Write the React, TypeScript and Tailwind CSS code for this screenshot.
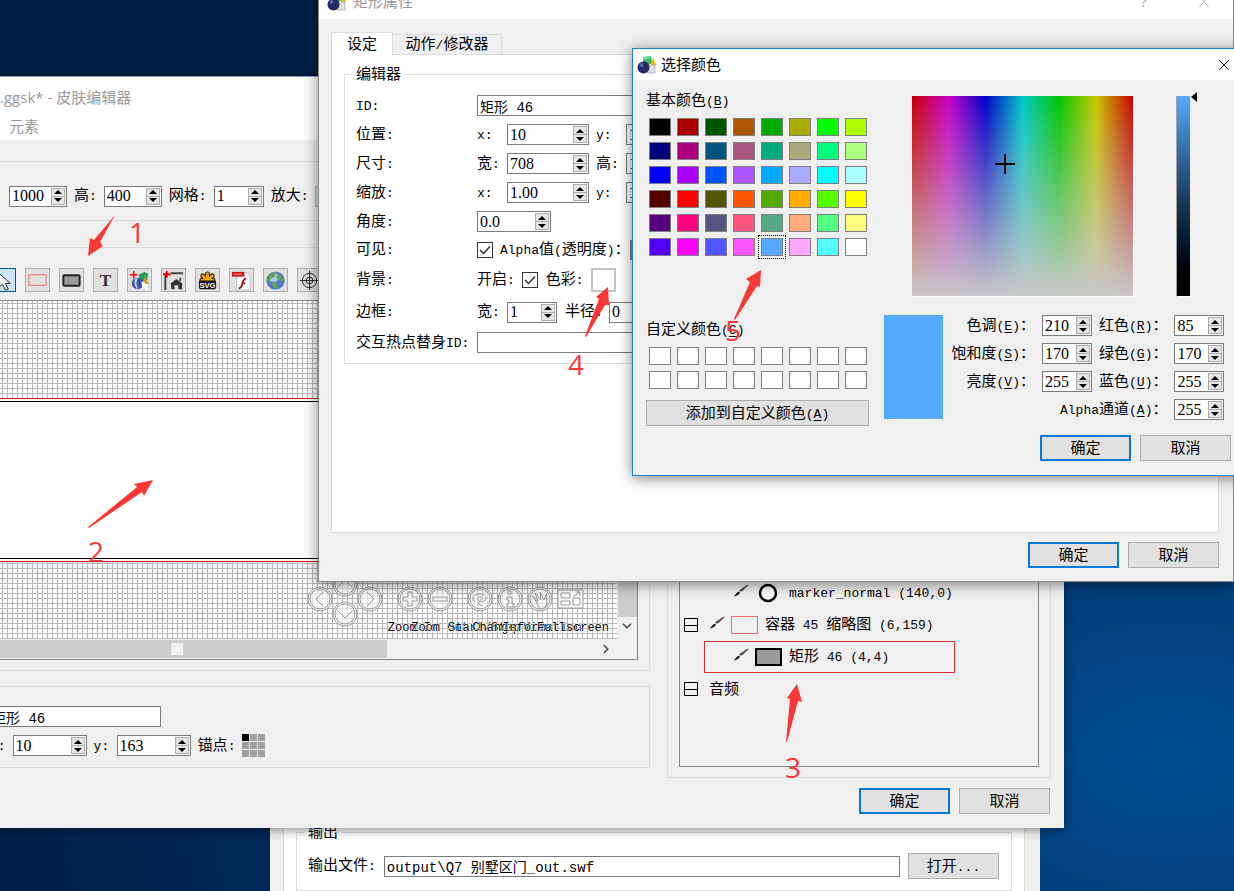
import React, { FC, ReactNode } from 'react';
import { X, ChevronDown, ChevronRight } from 'lucide-react';

const BASIC_COLORS = [
  'bg-[#000000]', 'bg-[#aa0000]', 'bg-[#005500]', 'bg-[#aa5500]', 'bg-[#00aa00]', 'bg-[#aaaa00]', 'bg-[#00ff00]', 'bg-[#aaff00]',
  'bg-[#00007f]', 'bg-[#aa007f]', 'bg-[#00557f]', 'bg-[#aa557f]', 'bg-[#00aa7f]', 'bg-[#aaaa7f]', 'bg-[#00ff7f]', 'bg-[#aaff7f]',
  'bg-[#0000ff]', 'bg-[#aa00ff]', 'bg-[#0055ff]', 'bg-[#aa55ff]', 'bg-[#00aaff]', 'bg-[#aaaaff]', 'bg-[#00ffff]', 'bg-[#aaffff]',
  'bg-[#550000]', 'bg-[#ff0000]', 'bg-[#555500]', 'bg-[#ff5500]', 'bg-[#55aa00]', 'bg-[#ffaa00]', 'bg-[#55ff00]', 'bg-[#ffff00]',
  'bg-[#55007f]', 'bg-[#ff007f]', 'bg-[#55557f]', 'bg-[#ff557f]', 'bg-[#55aa7f]', 'bg-[#ffaa7f]', 'bg-[#55ff7f]', 'bg-[#ffff7f]',
  'bg-[#5500ff]', 'bg-[#ff00ff]', 'bg-[#5555ff]', 'bg-[#ff55ff]', 'bg-[#55aaff]', 'bg-[#ffaaff]', 'bg-[#55ffff]', 'bg-[#ffffff]',
];
const SELECTED_COLOR = 44;

// Latin runs are set smaller than the Chinese ones; "&" marks the access key, as in Qt
const T: FC<{ children: string }> = ({ children }) => (
  <span className="whitespace-pre">
    {children.split(/([\x20-\x7e]+)/).map((part, i) => {
      if (i % 2 === 0) return part;
      const [before, after] = part.split('&');
      return (
        <span key={i} className="font-['Liberation_Mono',monospace] text-[13px]">
          {before}
          {after && <u className="underline-offset-2">{after[0]}</u>}
          {after && after.slice(1)}
        </span>
      );
    })}
  </span>
);

const Label: FC<{ id?: string; className?: string; children: string }> = ({ id, className = '', children }) => (
  <label htmlFor={id} className={`shrink-0 ${className}`}>
    <T>{children}</T>
  </label>
);

const Spin: FC<{ id: string; value: string; className?: string }> = ({ id, value, className = 'w-[50px]' }) => (
  <div className={`flex h-[21px] shrink-0 items-center border border-[#7a7a7a] bg-white pr-px ${className}`}>
    <input
      id={id}
      defaultValue={value}
      className="w-full min-w-0 flex-1 bg-transparent pl-0.5 font-['Liberation_Serif',serif] text-base leading-none outline-none"
    />
    <div className="flex h-[17px] w-[14px] shrink-0 flex-col border border-[#adadad] bg-[#e6e6e6]">
      <button aria-label="+" className="flex flex-1 items-center justify-center border-b border-[#adadad]">
        <svg width="8" height="4" viewBox="0 0 8 4"><path d="M0 4 4 0 8 4z" /></svg>
      </button>
      <button aria-label="-" className="flex flex-1 items-center justify-center">
        <svg width="8" height="4" viewBox="0 0 8 4"><path d="M0 0 4 4 8 0z" /></svg>
      </button>
    </div>
  </div>
);

const TextBox: FC<{ id: string; value: string; className?: string }> = ({ id, value, className = '' }) => (
  <input
    id={id}
    defaultValue={value}
    className={`h-[21px] min-w-0 border border-[#7a7a7a] bg-white font-['Liberation_Mono','Noto_Sans_CJK_SC',monospace] text-sm outline-none ${className}`}
  />
);

const Check: FC<{ id: string }> = ({ id }) => (
  <span className="relative h-4 w-4 shrink-0">
    <input id={id} type="checkbox" defaultChecked className="block h-4 w-4 appearance-none border border-[#333] bg-white" />
    <svg className="pointer-events-none absolute left-0 top-0" width="16" height="16" viewBox="0 0 16 16" fill="none" stroke="#333" strokeWidth="1.5">
      <path d="m3 8 3.5 3.5L13 4.5" />
    </svg>
  </span>
);

const Button: FC<{ primary?: boolean; className?: string; children: string }> = ({ primary, className = 'w-[91px]', children }) => (
  <button
    className={`h-[26px] shrink-0 bg-[#e1e1e1] leading-none ${primary ? 'border-2 border-[#0078d7]' : 'border border-[#adadad]'} ${className}`}
  >
    <T>{children}</T>
  </button>
);

const AppIcon: FC = () => (
  <svg width="20" height="20" viewBox="0 0 20 20">
    <path d="m6 2 8-1 1 7-5 3-4-3z" fill="#35b56b" />
    <path d="m6 2 8-1-2 3-6 1z" fill="#6fdc9b" />
    <path d="m14 10 2-8 3 8z" fill="#e8b90c" />
    <path d="m11 11 7-1v8h-8z" fill="#dfe4e6" stroke="#8c9498" strokeWidth=".6" />
    <circle cx="6.5" cy="12.5" r="6" fill="#23285e" />
    <circle cx="4.5" cy="10" r="2" fill="#5961a8" />
  </svg>
);

const Brush: FC = () => (
  <svg width="16" height="14" viewBox="0 0 16 14" className="mb-1 shrink-0">
    <path d="M15.500 1.200 14.500.5 7 5.500 6.200 7 7.800 7.800 9.500 7z" fill="#555" />
    <path d="M5.500 7.800 7 8.800C6 11 3.500 12 .5 12.500c1.500-1 2.500-3.500 5-4.700z" fill="#1c1c1c" />
  </svg>
);

const Expander: FC = () => (
  <button aria-label="-" className="shrink-0">
    <svg width="14" height="14" viewBox="0 0 14 14" fill="none" stroke="#000"><path d="M.5.5h13v13H.5zM.5 7.500h13" /></svg>
  </button>
);

const TOOLS: { name: string; icon: ReactNode }[] = [
  { name: 'select', icon: <path d="M7 4v15l4-3 3 6 3-1-3-6h5z" fill="#fff" stroke="#222" /> },
  { name: 'container', icon: <rect x="3" y="6" width="18" height="11" fill="none" stroke="#f26a6a" /> },
  { name: 'rectangle', icon: <rect x="3.500" y="6.500" width="17" height="11" rx="1" fill="#999" stroke="#222" strokeWidth="2" /> },
  {
    name: 'text',
    icon: <text x="12" y="18" textAnchor="middle" fontFamily="Liberation Serif" fontWeight="700" fontSize="18" fill="#333">T</text>,
  },
  {
    name: 'image',
    icon: (
      <>
        <path d="m11 6 6-3 4 2-1 7-7 1z" fill="#2a9a5c" />
        <path d="m17 7 5 9h-5z" fill="#d9a514" />
        <circle cx="10" cy="15" r="6" fill="#3a55b0" />
        <path d="M8 10q-3 5 1 10l2 1q-4-5-1-11z" fill="#dbe4ff" />
        <path d="m14 13 1 8 2-2 3 4 2-2-3-3 3-1z" fill="#fff" />
        <path d="M6 2v8M2 6h8" stroke="#f00" strokeWidth="1.500" />
      </>
    ),
  },
  {
    name: 'hotspot',
    icon: (
      <>
        <path d="M3.500 6v16M9 4.500h13" stroke="#444" strokeWidth="2" />
        <path d="m9 15 6-4.500 6 4.500v6h-4v-4h-4v4h-3z" fill="#333" />
        <path d="M18 9h2v4h-2z" fill="#555" />
        <path d="M5 2v7M1 5.500h8" stroke="#e00" strokeWidth="2" />
      </>
    ),
  },
  {
    name: 'svg',
    icon: (
      <>
        <g stroke="#111" strokeWidth="5" strokeLinecap="round">
          <path d="M12 12V5M12 12 7 7M12 12l5-5M12 12H6M12 12h6" />
        </g>
        <g stroke="#f6a31c" strokeWidth="3" strokeLinecap="round">
          <path d="M12 12V5M12 12 7 7M12 12l5-5M12 12H6M12 12h6" />
        </g>
        <rect x="3" y="12" width="18" height="9" rx="2" fill="#111" />
        <text x="12" y="20" textAnchor="middle" fontFamily="Liberation Sans" fontWeight="700" fontSize="8" fill="#fff">SVG</text>
      </>
    ),
  },
  {
    name: 'flash',
    icon: (
      <>
        <path d="M7 4h11l3 3v15H7z" fill="#fff" stroke="#bbb" />
        <path d="M2 3h13v5H2z" fill="#c81414" />
        <path d="M4 5.500h8" stroke="#f3a3a3" />
        <path d="M17 10q-3 0-4 5t-4 5M12 15h4" fill="none" stroke="#b00c0c" strokeWidth="2" />
      </>
    ),
  },
  {
    name: 'web',
    icon: (
      <>
        <circle cx="12" cy="12" r="9.500" fill="#5575c9" />
        <circle cx="10" cy="9" r="5" fill="#a9c2f5" />
        <path d="M5 7q4-5 7-3l-1 4-4 2-1 5-3-3zM14 5l5 3 1 5-4-1-3-3zM9 13l5 1 1 4-3 3-3-3z" fill="#5da553" />
      </>
    ),
  },
  {
    name: 'target',
    icon: (
      <g fill="none" stroke="#222">
        <circle cx="12" cy="12" r="7.500" />
        <circle cx="12" cy="12" r="3.500" />
        <path d="M12 2v20M2 12h20" />
      </g>
    ),
  },
];

// Round navigation buttons of the skin, centred on cx / cy inside the canvas drawing
const NAV_BUTTONS = [
  { cx: 14, cy: 28, d: 'm3-7-7 7 7 7' },
  { cx: 39, cy: 13, d: 'm-7 3 7-7 7 7' },
  { cx: 64, cy: 28, d: 'm-3-7 7 7-7 7' },
  { cx: 39, cy: 43, d: 'm-7-3 7 7 7-7' },
  { cx: 104, cy: 28, d: 'm-2-7h4v5h5v4h-5v5h-4v-5h-5v-4h5z' },
  { cx: 134, cy: 28, d: 'm-7-2h14v4h-14z' },
  { cx: 174, cy: 28, d: 'm-5 3c-5-4 0-8 5-8s9 5 4 7-7-1-6-3 5-1 4 1m-1 0-3 5 4 2' },
  { cx: 204, cy: 28, d: 'm-3-2h5v7h2v3h-7v-3h2v-4h-2zm1-6h3v3h-3z' },
  { cx: 234, cy: 28, d: 'm-7-3 5 6-3-9 6 7-1-8 4 8 2-6 1 9-2 5-5 1z' },
];

const SkinCanvas: FC = () => (
  <div className="flex h-[360px] w-[647px] border border-[#828790]">
    <div className="flex min-w-0 flex-1 flex-col">
      <div className="relative flex-1 overflow-hidden bg-white bg-[linear-gradient(to_right,#b8b8b8_1px,transparent_1px),linear-gradient(to_bottom,#b8b8b8_1px,transparent_1px)] bg-[size:5px_5px] bg-[position:0px_2px] pt-[97px]">
        <div className="flex h-[164px] flex-col justify-between border-y border-[#d01414] bg-white py-0.5">
          <div className="h-px bg-black" />
          <div className="h-px bg-black" />
        </div>
        <svg className="absolute bottom-0 right-[30px] overflow-visible" width="281" height="68" viewBox="0 0 281 68">
          <g fill="none" stroke="#999">
            {NAV_BUTTONS.map((b) => (
              <g key={b.cx + '-' + b.cy} transform={`translate(${b.cx} ${b.cy})`}>
                <circle r="12" fill="#fff" fillOpacity=".6" />
                <circle r="10" />
                <path d={'M0 0' + b.d} />
              </g>
            ))}
            <path d="M252 19h25v18h-25z" fill="#fff" />
            <path d="M255 22h9v5h-9zM255 30h9v4h-9zM267 27h7v7h-7zM267 26l7-5m-4 0h4v4" />
          </g>
          <g
            fontFamily="Liberation Mono"
            fontSize="12"
            textAnchor="middle"
            fill="#000"
            stroke="#fff"
            strokeWidth="1"
            paintOrder="stroke"
          >
            <text x="107" y="60">Zoom In</text>
            <text x="134" y="60">Zoom Out</text>
            <text x="178" y="60">Start/Stop</text>
            <text x="206" y="60">Change View</text>
            <text x="236" y="60">Information</text>
            <text x="267" y="60">Fullscreen</text>
          </g>
        </svg>
      </div>
      <div className="flex h-5 shrink-0 items-center justify-between bg-[#f0f0f0] pr-1">
        <div className="flex h-[18px] w-[395px] items-center bg-[#cdcdcd] pl-[179px]">
          <div className="h-3 w-3 bg-[#f0f0f0]" />
        </div>
        <ChevronRight size={14} strokeWidth={3} color="#505050" />
      </div>
    </div>
    <div className="flex w-5 shrink-0 flex-col items-center bg-[#f0f0f0] pb-6">
      <div className="w-[19px] flex-1 bg-[#cdcdcd]" />
      <ChevronDown size={14} strokeWidth={3} color="#505050" className="my-0.5" />
    </div>
  </div>
);

const OutputWindow: FC = () => (
  <section className="absolute left-[270px] top-[790px] w-[770px] bg-[#f0f0f0] pl-[13px] pr-[15px]">
    <div className="border-x border-[#dcdcdc] bg-white px-3 pb-4 pt-[33px]">
      <fieldset className="border border-[#dcdcdc] pb-[11px] pl-[11px] pr-3">
        <legend className="-ml-1 px-1">输出</legend>
        <div className="flex items-center gap-2 pt-3">
          <Label id="outfile">输出文件:</Label>
          <TextBox id="outfile" value="output\Q7 别墅区门_out.swf" className="flex-1 px-0.5" />
          <Button>打开...</Button>
        </div>
      </fieldset>
    </div>
  </section>
);

const SkinEditor: FC = () => (
  <section className="absolute -left-[9px] top-[76px] w-[1073px] border-t border-[#8f9fc4] bg-[#f0f0f0] shadow-[0_2px_10px_rgba(0,0,0,0.45)]">
    <header className="bg-white pl-[9px] font-['Open_Sans','Noto_Sans_CJK_SC',sans-serif] text-[#999]">
      <h1 className="flex h-10 items-center">.ggsk* - 皮肤编辑器</h1>
      <nav className="flex h-[23px] items-start pl-[9px]">
        <button>元素</button>
      </nav>
    </header>
    <div className="flex gap-[17px] pr-[13px] pt-[21px]">
      <div className="w-[659px] shrink-0">
        <div className="flex h-[60px] items-center gap-[7px] border-y border-r border-[#dcdcdc] pb-0.5 pl-[18px] pt-3">
          <Spin id="sk-w" value="1000" className="w-[58px]" />
          <Label id="sk-h">高:</Label>
          <Spin id="sk-h" value="400" className="w-[58px]" />
          <Label id="sk-grid">网格:</Label>
          <Spin id="sk-grid" value="1" />
          <Label id="sk-zoom">放大:</Label>
          <select id="sk-zoom" className="h-[21px] w-20 border border-[#adadad] bg-[#e1e1e1]">
            <option>100%</option>
          </select>
        </div>
        <div className="mt-[26px] border-y border-r border-[#dcdcdc] pb-2.5 pt-5">
          <div className="mb-2 flex gap-[9px]">
            {TOOLS.map((tool, i) => (
              <button
                key={tool.name}
                aria-label={tool.name}
                className={`flex h-6 w-[25px] shrink-0 items-center justify-center border ${
                  i === 0 ? 'border-[#005499] bg-[#cce4f7]' : 'border-[#adadad] bg-[#e1e1e1]'
                }`}
              >
                <svg width="23" height="23" viewBox="0 0 24 24" className="shrink-0">{tool.icon}</svg>
              </button>
            ))}
          </div>
          <SkinCanvas />
        </div>
        <div className="mt-[15px] border-y border-r border-[#dcdcdc] pb-2.5 pt-[19px]">
          <TextBox id="el-id" value="矩形 46" className="block w-[170px]" />
          <div className="mt-[7px] flex items-center gap-[7px]">
            <Label id="el-x" className="-ml-px">x:</Label>
            <Spin id="el-x" value="10" className="w-[74px]" />
            <Label id="el-y" className="w-4">y:</Label>
            <Spin id="el-y" value="163" className="w-[74px]" />
            <span><T>锚点:</T></span>
            <div className="grid grid-cols-3 gap-px">
              {Array.from({ length: 9 }, (_, i) => (
                <button key={i} aria-label={`anchor ${i + 1}`} className={`h-[7px] w-[7px] ${i === 0 ? 'bg-black' : 'bg-[#a0a0a0]'}`} />
              ))}
            </div>
          </div>
        </div>
      </div>
      <div className="-mb-2.5 flex flex-1 border border-[#dcdcdc] p-[11px] pb-2.5">
        <ul className="flex flex-1 flex-col justify-end border border-[#828790] pb-[61px] pl-1">
          <li className="flex h-8 items-center pl-[49px]">
            <Brush />
            <svg width="26" height="20" viewBox="0 0 26 20" className="ml-1.5 shrink-0">
              <circle cx="13" cy="10" r="8" fill="#fff" stroke="#000" strokeWidth="2.500" />
            </svg>
            <span className="ml-2"><T>marker_normal (140,0)</T></span>
          </li>
          <li className="flex h-8 items-center">
            <Expander />
            <span className="ml-[11px] flex"><Brush /></span>
            <span className="ml-1.5 h-[18px] w-[27px] border border-[#f26a6a]" />
            <span className="ml-[7px]"><T>容器 45 缩略图 (6,159)</T></span>
          </li>
          <li className="ml-5 flex h-8 w-[251px] items-center border border-[#d92b2b] pl-7">
            <Brush />
            <span className="ml-1.5 h-[18px] w-[27px] border-2 border-black bg-[#999]" />
            <span className="ml-[7px]"><T>矩形 46 (4,4)</T></span>
          </li>
          <li className="flex h-8 items-center">
            <Expander />
            <span className="ml-[11px]">音频</span>
          </li>
        </ul>
      </div>
    </div>
    <footer className="flex justify-end gap-[9px] pb-[14px] pr-[14px] pt-5">
      <Button primary>确定</Button>
      <Button>取消</Button>
    </footer>
  </section>
);

const Row: FC<{ label: string; id?: string; className?: string; children: ReactNode }> = ({ label, id, className = 'h-[29px]', children }) => (
  <div className={`flex items-center ${className}`}>
    <Label id={id} className="w-[121px]">{label}</Label>
    {children}
  </div>
);

const PairRow: FC<{ label: string; a: string; b: string; name: string; value: string }> = ({ label, a, b, name, value }) => (
  <Row label={label} id={name + '-a'}>
    <Label id={name + '-a'} className="w-[30px]">{a}</Label>
    <Spin id={name + '-a'} value={value} className="w-[82px]" />
    <Label id={name + '-b'} className="ml-[7px] w-[30px]">{b}</Label>
    <Spin id={name + '-b'} value="1" className="w-[82px]" />
  </Row>
);

const RectProperties: FC = () => (
  <section className="absolute -top-3 left-[318px] w-[916px] border border-[#8a8a8a] bg-[#f0f0f0] shadow-[0_2px_14px_rgba(0,0,0,0.5)]">
    <header className="flex h-[30px] items-center bg-white pb-1 pl-2 text-[#999]">
      <AppIcon />
      <h2 className="ml-1.5 flex-1">矩形属性</h2>
      <button className="mr-12">?</button>
      <button aria-label="close" className="mr-5"><X size={18} strokeWidth={1} /></button>
    </header>
    <div className="pb-[13px] pl-3 pr-[14px] pt-[13px]">
      <div className="flex items-end">
        <button className="relative z-10 -mb-px h-[23px] w-[62px] border border-b-0 border-[#dcdcdc] bg-white">设定</button>
        <button className="h-5 w-[109px] border border-b-0 border-l-0 border-[#d9d9d9]"><T>动作/修改器</T></button>
      </div>
      <div className="min-h-[479px] border border-[#dcdcdc] bg-white px-3 pt-2.5">
        <fieldset className="border border-[#dcdcdc] px-[11px] pb-1.5">
          <legend className="-ml-1 px-1">编辑器</legend>
          <div className="pt-2">
            <Row label="ID:" id="r-id">
              <TextBox id="r-id" value="矩形 46" className="flex-1 px-0.5" />
            </Row>
            <PairRow label="位置:" a="x:" b="y:" name="r-pos" value="10" />
            <PairRow label="尺寸:" a="宽:" b="高:" name="r-size" value="708" />
            <PairRow label="缩放:" a="x:" b="y:" name="r-scale" value="1.00" />
            <Row label="角度:" id="r-angle">
              <Spin id="r-angle" value="0.0" className="w-[74px]" />
            </Row>
            <Row label="可见:" id="r-visible" className="h-7">
              <Check id="r-visible" />
              <Label id="r-alpha" className="ml-[7px]">Alpha值(透明度)：</Label>
              <input id="r-alpha" type="range" defaultValue={100} className="h-5 w-24 appearance-none bg-[#7a8a99]" />
            </Row>
            <Row label="背景:" id="r-bg" className="h-8">
              <Label id="r-bg">开启:</Label>
              <span className="ml-[7px] flex"><Check id="r-bg" /></span>
              <span className="ml-2"><T>色彩:</T></span>
              <button aria-label="色彩" className="ml-[7px] h-6 w-[25px] border-2 border-[#c4c4c4] bg-white" />
            </Row>
            <Row label="边框:" id="r-bw" className="h-8">
              <Label id="r-bw" className="w-[30px]">宽:</Label>
              <Spin id="r-bw" value="1" />
              <Label id="r-radius" className="ml-2 w-11">半径:</Label>
              <Spin id="r-radius" value="0" />
            </Row>
            <Row label="交互热点替身ID:" id="r-proxy">
              <TextBox id="r-proxy" value="" className="flex-1" />
            </Row>
          </div>
        </fieldset>
      </div>
      <div className="mt-[9px] flex justify-end gap-[9px]">
        <Button primary>确定</Button>
        <Button>取消</Button>
      </div>
    </div>
  </section>
);

const ColorDialog: FC = () => (
  <section className="absolute left-[632px] top-12 w-[612px] border border-[#1883d7] bg-[#f0f0f0] shadow-[0_2px_14px_rgba(0,0,0,0.5)]">
    <header className="flex h-[31px] items-center bg-white pl-1">
      <AppIcon />
      <h2 className="ml-1 flex-1">选择颜色</h2>
      <button aria-label="close" className="mr-2.5"><X size={18} strokeWidth={1.25} /></button>
    </header>
    <div className="flex gap-[15px] pb-[14px] pl-[13px]">
      <div className="w-[223px] shrink-0 pt-[11px]">
        <h3 className="h-[18px]"><T>基本颜色(&B)</T></h3>
        <div className="mt-[9px] grid w-[221px] grid-cols-8 gap-1.5 pl-[3px]">
          {BASIC_COLORS.map((color, i) => (
            <button
              key={color}
              aria-label={color.slice(4, 11)}
              className={`h-[18px] w-[22px] border border-[#808080] ${color} ${
                i === SELECTED_COLOR ? 'outline-1 outline-offset-2 outline-dotted outline-black' : ''
              }`}
            />
          ))}
        </div>
        <h3 className="mt-16 h-[18px]"><T>自定义颜色(&C)</T></h3>
        <div className="mt-[9px] grid w-[221px] grid-cols-8 gap-1.5 pl-[3px]">
          {Array.from({ length: 16 }, (_, i) => (
            <button key={i} aria-label={`custom ${i + 1}`} className="h-[18px] w-[22px] border border-[#808080] bg-white" />
          ))}
        </div>
        <Button className="mt-[11px] w-full">添加到自定义颜色(&A)</Button>
      </div>
      <div className="pt-4">
        <div className="flex pl-7">
          <div className="relative h-[201px] w-[222px] border-b border-r border-white bg-[linear-gradient(to_bottom,transparent,#c8c8c8),linear-gradient(to_right,#c80000,#c800c8,#0000c8,#00c8c8,#00c800,#c8c800,#c80000)]">
            <svg className="absolute left-[83px] top-[58px]" width="20" height="20" viewBox="0 0 20 20" stroke="#000" strokeWidth="2">
              <path d="M10 0v20M0 10h20" />
            </svg>
          </div>
          <div className="ml-[42px] h-[201px] w-[14px] border-b border-l border-b-white border-l-[#a0a0a0] bg-linear-to-b from-[#55aaff] to-black" />
          <svg width="6" height="10" viewBox="0 0 6 10" className="-mt-1 ml-px"><path d="M6 0v10L0 5z" /></svg>
        </div>
        <div className="mt-[18px] flex gap-2">
          <div className="h-[104px] w-[59px] shrink-0 bg-[#55aaff]" />
          <div className="grid grid-cols-[84px_50px_auto_50px] items-center justify-items-end gap-[7px]">
            <Label id="c-h">色调(&E)：</Label>
            <Spin id="c-h" value="210" />
            <Label id="c-r">红色(&R)：</Label>
            <Spin id="c-r" value="85" />
            <Label id="c-s">饱和度(&S)：</Label>
            <Spin id="c-s" value="170" />
            <Label id="c-g">绿色(&G)：</Label>
            <Spin id="c-g" value="170" />
            <Label id="c-v">亮度(&V)：</Label>
            <Spin id="c-v" value="255" />
            <Label id="c-b">蓝色(&U)：</Label>
            <Spin id="c-b" value="255" />
            <Label id="c-a" className="col-span-3">Alpha通道(&A)：</Label>
            <Spin id="c-a" value="255" />
          </div>
        </div>
        <div className="mt-[15px] flex w-[347px] justify-end gap-[9px]">
          <Button primary>确定</Button>
          <Button>取消</Button>
        </div>
      </div>
    </div>
  </section>
);

const NOTE = "pointer-events-none absolute overflow-visible fill-[#fa3737] font-['Open_Sans',sans-serif] text-[28px]";

// Numbered red arrows that lead through the steps
const Notes: FC = () => (
  <>
    <svg className={`${NOTE} left-[88px] top-[215px]`} width="60" height="42">
      <path d="M27 0 12 27 15 31 0 41 2 23 6 25z" />
      <text x="41" y="28">1</text>
    </svg>
    <svg className={`${NOTE} left-[88px] top-[480px]`} width="66" height="84">
      <path d="M65 0 46 4 49 7 0 47 1 48 54 12 56 16z" />
      <text x="0" y="82">2</text>
    </svg>
    <svg className={`${NOTE} left-[785px] top-[684px]`} width="20" height="94">
      <path d="M12 0 2 14 5 15 1 58 2 58 13 17 17 18z" />
      <text x="0" y="94">3</text>
    </svg>
    <svg className={`${NOTE} left-[568px] top-[287px]`} width="44" height="88">
      <path d="M40 0 28 10 31 12 17 49 18 50 37 18 41 18z" />
      <text x="0" y="88">4</text>
    </svg>
    <svg className={`${NOTE} left-[725px] top-[269px]`} width="40" height="72">
      <path d="M36 1 21 10 25 13 9 50 10 51 32 17 35 18z" />
      <text x="0" y="72">5</text>
    </svg>
  </>
);

const App: FC = () => (
  <main className="relative h-screen w-full overflow-hidden bg-[radial-gradient(ellipse_at_95%_85%,#004d92_0%,#003a73_22%,#002a58_50%,#001f45_80%)] font-['Liberation_Serif','Noto_Sans_CJK_SC',serif] text-[15px] leading-[18px] text-black">
    <OutputWindow />
    <SkinEditor />
    <RectProperties />
    <ColorDialog />
    <Notes />
  </main>
);

export default App;
